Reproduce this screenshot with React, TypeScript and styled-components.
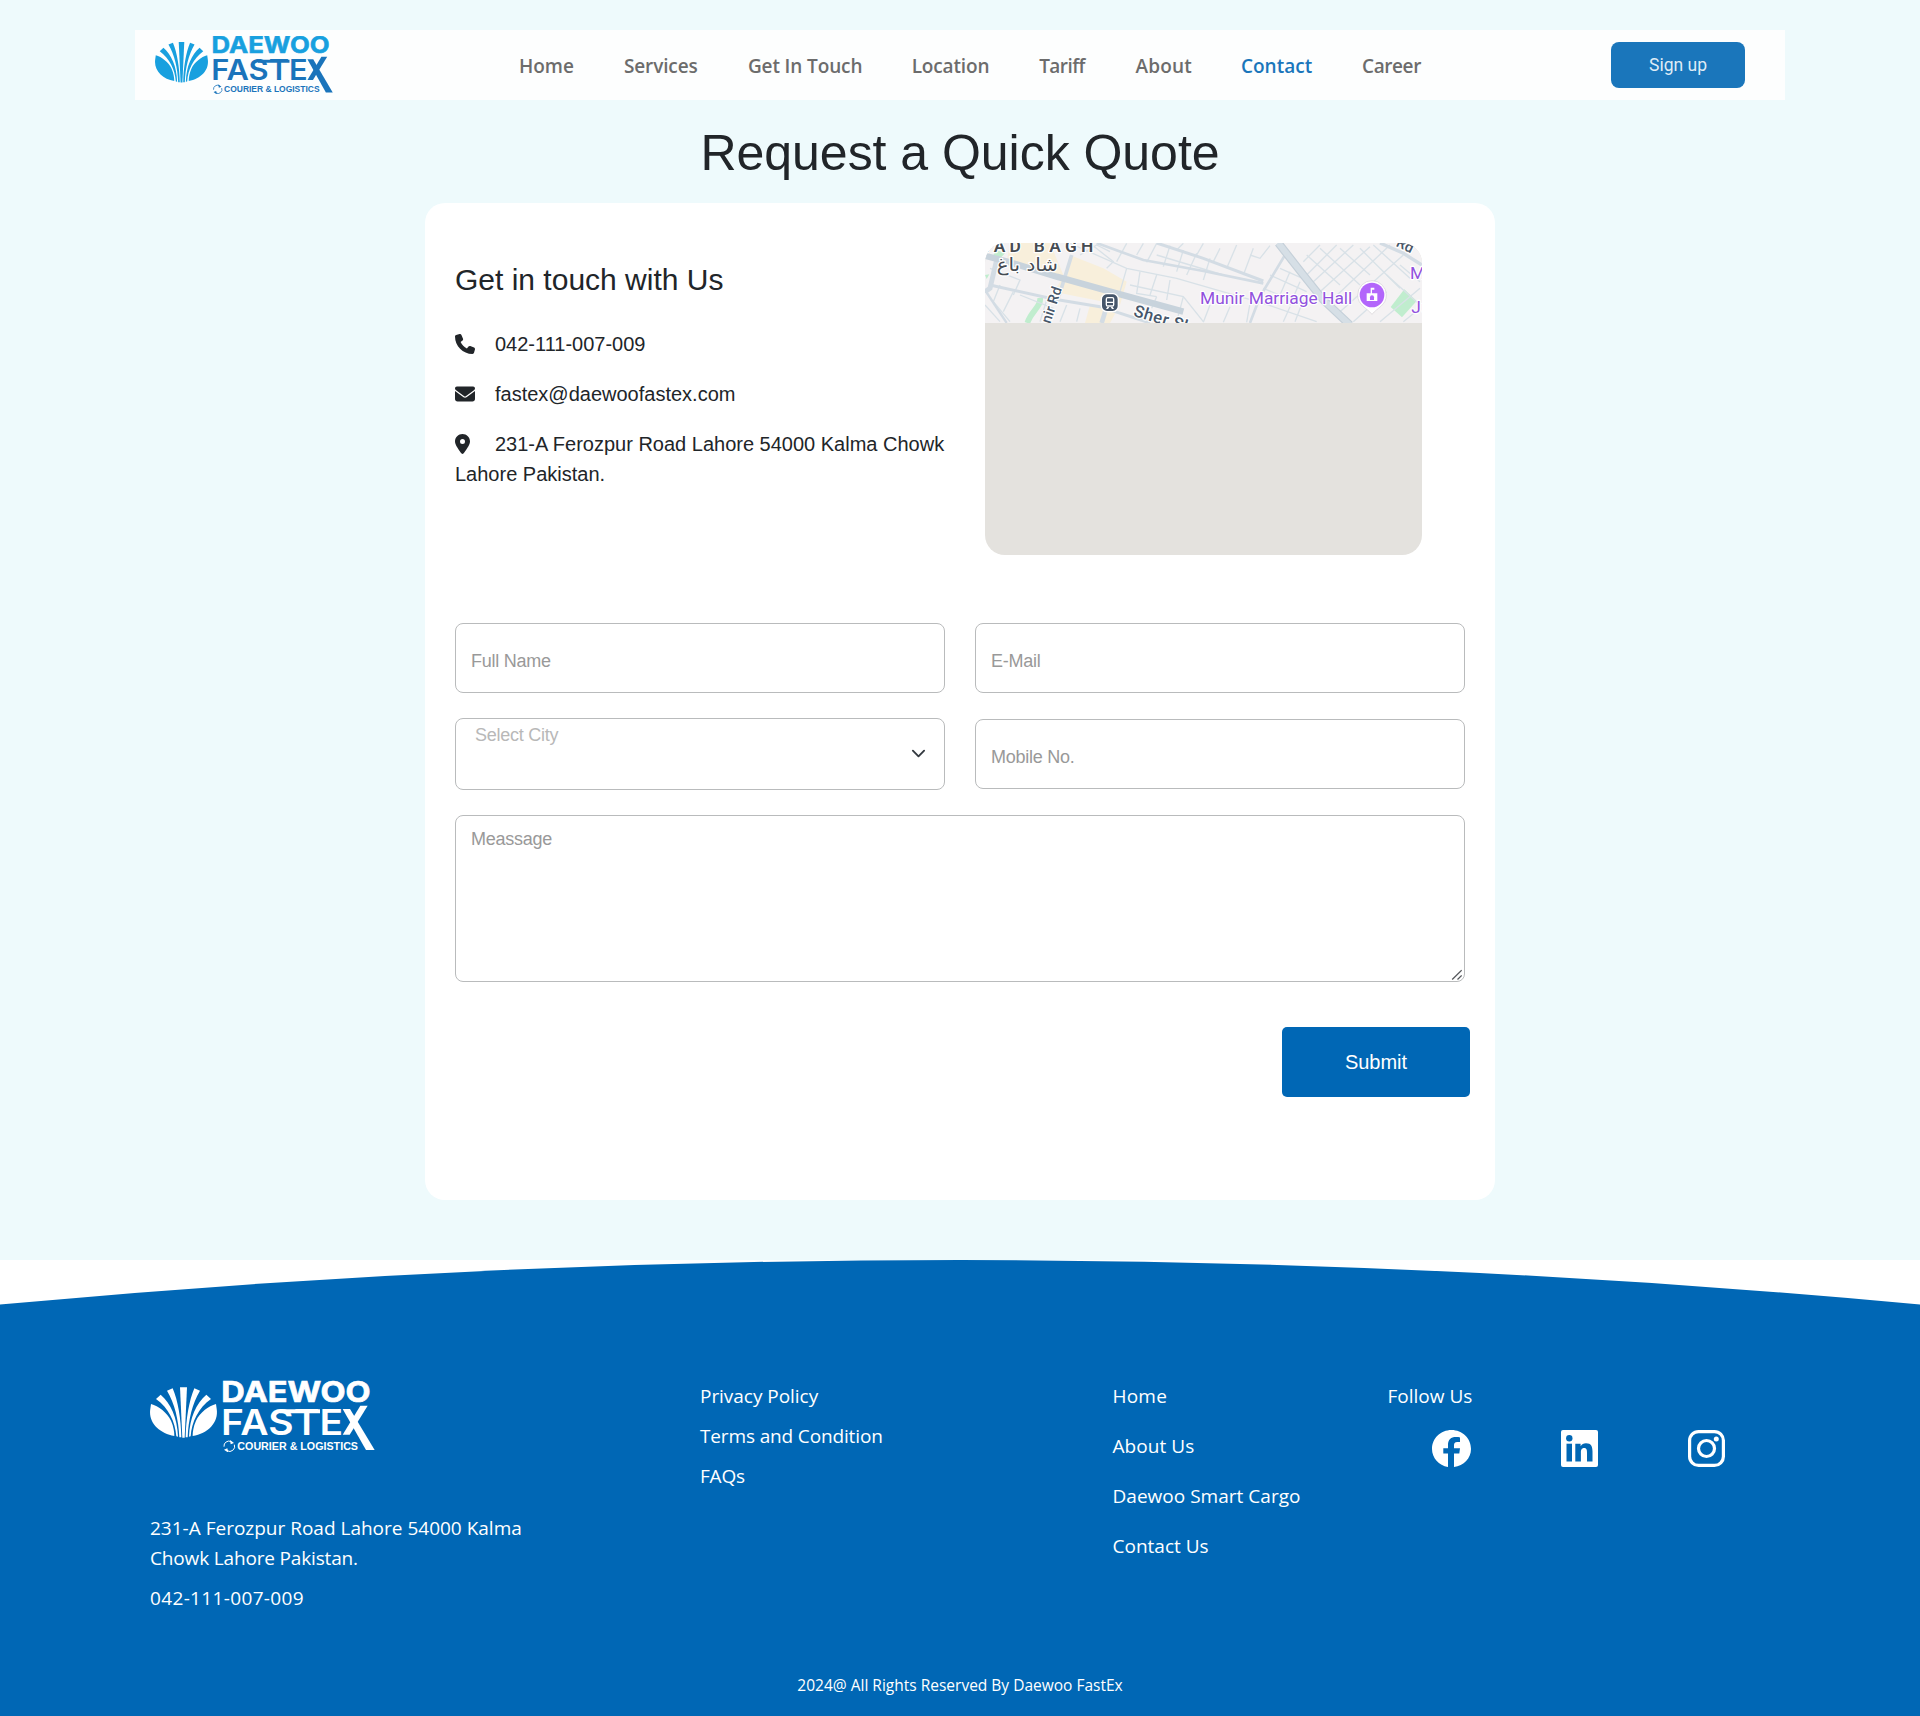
import React from "react";
import styled, { createGlobalStyle } from "styled-components";
import { FaEnvelope, FaLocationDot, FaPhone } from "react-icons/fa6";

const BLUE = "#0067b5";
const UI = `"Open Sans", "Noto Sans", sans-serif`;
const ARIAL = `"Liberation Sans", Arial, sans-serif`;

const GlobalStyle = createGlobalStyle`
  *, *::before, *::after { box-sizing: border-box; }
  body { margin: 0; background: #fff; color: #212529; font-family: ${ARIAL}; font-size: 20px; line-height: 30px; }
  h1, h2, p, ul { margin: 0; padding: 0; font-weight: 400; list-style: none; }
  a { color: inherit; text-decoration: none; }
`;

/* ---------- page shell ---------- */

const Main = styled.main`
  height: 1260px;
  padding-top: 30px;
  background: #eefafc;
`;

const NavBar = styled.header`
  display: flex;
  align-items: center;
  width: 1650px;
  height: 70px;
  margin: 0 auto;
  padding: 0 40px 0 20px;
  background: #fdfefe;
`;

const NavLogo = styled.div`
  display: flex;
  width: 364px;
  padding-bottom: 1px;
`;

const NavList = styled.nav`
  display: flex;
  gap: 50px;
  padding-top: 2px;
`;

const NavLink = styled.a<{ $w: number; $ls: number; $active?: boolean }>`
  width: ${(p) => p.$w}px;
  white-space: nowrap;
  font: 600 19px/30px ${UI};
  letter-spacing: ${(p) => p.$ls}px;
  color: ${(p) => (p.$active ? "#1a76bb" : "#6c6c6c")};
`;

const SignUp = styled.button`
  width: 134px;
  height: 46px;
  margin: 0 0 0 auto;
  padding: 0;
  border: 0;
  border-radius: 8px;
  background: #1a76bb;
  color: #dfecf6;
  font: 400 17.5px/46px Roboto, sans-serif;
`;

const Title = styled.h1`
  margin-top: 23px;
  text-align: center;
  font-size: 50px;
  line-height: 60px;
  letter-spacing: -0.03px;
`;

const Card = styled.section`
  width: 1070px;
  height: 997px;
  margin: 20px auto 0;
  padding: 40px 30px 0;
  border-radius: 20px;
  background: #fff;
`;

/* ---------- contact block ---------- */

const Intro = styled.div`
  display: grid;
  grid-template-columns: 490px 437px;
  column-gap: 40px;
  height: 380px;
`;

const Contact = styled.div`
  padding-top: 19px;
`;

const SubTitle = styled.h2`
  margin-bottom: 31px;
  font-size: 30px;
  line-height: 36px;
`;

const ContactLine = styled.p<{ $gap: number }>`
  margin-bottom: 20px;
  svg { margin-right: ${(p) => p.$gap}px; vertical-align: -2.5px; }
`;

const PinIcon = styled(FaLocationDot)`
  width: 15px;
  height: 20px;
`;

const MapBox = styled.div`
  height: 312px;
  overflow: hidden;
  border-radius: 20px;
  background: #e4e2de;
  svg { display: block; }
`;

/* ---------- form ---------- */

const Form = styled.form`
  display: grid;
  grid-template-columns: 490px 490px;
  column-gap: 30px;
  align-items: center;
`;

const Input = styled.input`
  width: 100%;
  height: 70px;
  padding: 6px 15px 0;
  border: 1px solid #b9bbbc;
  border-radius: 8px;
  outline: 0;
  background: #fff;
  font: 18px ${ARIAL};
  letter-spacing: -0.26px;
  &::placeholder { color: #999; opacity: 1; }
`;

const Select = styled.div`
  display: flex;
  justify-content: space-between;
  height: 72px;
  margin: 25px 0;
  padding: 1px 18px 0 19px;
  border: 1px solid #b9bbbc;
  border-radius: 8px;
  color: #b8b8b8;
  font-size: 18px;
  letter-spacing: -0.26px;
  svg { margin-top: 26px; }
`;

const MessageBox = styled.div`
  position: relative;
  grid-column: 1 / -1;
  height: 167px;
`;

const Message = styled.textarea`
  display: block;
  width: 100%;
  height: 100%;
  padding: 8px 15px;
  border: 1px solid #b9bbbc;
  border-radius: 8px;
  outline: 0;
  resize: none;
  font: 18px/30px ${ARIAL};
  letter-spacing: -0.26px;
  &::placeholder { color: #999; opacity: 1; }
`;

const Grip = styled.svg`
  position: absolute;
  right: 3px;
  bottom: 2px;
`;

const Submit = styled.button`
  grid-column: 2;
  justify-self: end;
  width: 188px;
  height: 70px;
  margin: 45px -5px 0 0;
  padding: 0;
  border: 0;
  border-radius: 5px;
  background: ${BLUE};
  color: #fff;
  font: 20px/70px ${ARIAL};
`;

/* ---------- footer ---------- */

const Curve = styled.svg`
  display: block;
  width: 100%;
  height: 45px;
`;

const Footer = styled.footer`
  height: 411px;
  padding: 75px 0 0 150px;
  overflow: hidden;
  background: ${BLUE};
  color: #fff;
  font: 19px/30px ${UI};
`;

const FooterGrid = styled.div`
  display: grid;
  grid-template-columns: 550px 412.500px 275px 400px;
  height: 293px;
`;

const FooterLogo = styled.div`
  display: flex;
  margin-bottom: 61px;
`;

const FooterList = styled.ul<{ $gap: number }>`
  display: flex;
  flex-direction: column;
  gap: ${(p) => p.$gap}px;
  padding-top: 1px;
`;

const Label = styled.span<{ $ls?: number }>`
  display: block;
  white-space: nowrap;
  letter-spacing: ${(p) => p.$ls ?? 0}px;
`;

const Phone = styled(Label)`
  margin-top: 10px;
`;

const Follow = styled.div`
  padding-top: 1px;
`;

const Socials = styled.div`
  display: flex;
  justify-content: space-between;
  width: 293px;
  margin: 19px 0 0 44.500px;
`;

const Copyright = styled.p`
  margin-left: -150px;
  text-align: center;
  font-size: 15.5px;
  line-height: 24px;
`;

/* ---------- drawings ---------- */

type LogoProps = { width: number; height: number; top: string; bottom: string };

function Logo({ width, height, top, bottom }: LogoProps) {
  const half = (
    <>
      <path d="M93 162C115 168 142 188 153 212C161 230 163 246 163 258C118 250 84 218 91 176Z" />
      <path d="M108 147L122 134C152 160 172 202 174 260L169 259C166 216 146 174 108 147Z" />
      <path d="M141 122L158 115C174 152 183 208 184 262L178 262C176 210 164 160 141 122Z" />
    </>
  );
  return (
    <svg width={width} height={height} viewBox="90 90 675 216" preserveAspectRatio="none">
      <g fill={top}>
        {half}
        <g transform="translate(381 0) scale(-1 1)">{half}</g>
        <path d="M180 112H201L194 263H187Z" />
      </g>
      <text x="304" y="155" textLength="448" lengthAdjust="spacingAndGlyphs" fill={top} stroke={top} strokeWidth="2"
        fontFamily="Inter, sans-serif" fontWeight="750" fontSize="87">DAEWOO</text>
      <text x="303" y="254" textLength="366" lengthAdjust="spacingAndGlyphs" fill={bottom}
        fontFamily="Inter, sans-serif" fontWeight="600" fontSize="105">FASTE</text>
      <g fill={bottom}>
        <path d="M668 177H690L764 300H738Z" />
        <path d="M721 167H743L689 254H668Z" />
        <path d="M480 178H600V190H480Z" />
      </g>
      <g fill="none" stroke={bottom} strokeWidth="3">
        <path d="M312 290A15 15 0 0 1 334 275" />
        <path d="M343 284A15 15 0 0 1 321 302" />
      </g>
      <path d="M330 270L342 279L332 283Z M325 308L312 299L322 295Z" fill={bottom} />
      <text x="352" y="299" textLength="362" lengthAdjust="spacingAndGlyphs" fill={bottom}
        fontFamily="Liberation Sans, sans-serif" fontWeight="700" fontSize="33">COURIER &amp; LOGISTICS</text>
    </svg>
  );
}

const MINOR_ROADS = [
  "M300 55L470 130L620 160L880 235", "M360 55L430 110L410 130", "M330 90L380 60L420 80", "M470 55L440 110",
  "M520 55L500 90", "M560 55L530 112", "M600 62L580 125", "M640 75L620 140", "M680 85L650 150", "M720 100L700 165",
  "M470 130L450 200", "M510 140L500 205L560 215", "M480 180L640 215L700 290", "M560 150L540 210", "M600 165L590 225",
  "M640 55L620 75", "M700 55L680 90", "M750 70L730 110", "M800 60L770 130", "M850 70L820 150", "M900 62L870 100L840 90",
  "M560 90L760 150", "M640 215L620 290", "M720 240L700 292", "M780 245L760 292", "M840 235L830 292", "M560 215L545 250",
  "M900 150L1010 200", "M930 130L1020 170", "M880 190L1000 240", "M960 140L930 210", "M990 170L960 240", "M880 235L1040 290",
  "M960 245L940 290", "M1000 225L975 290", "M1050 60L1000 110", "M1100 60L1010 150", "M1150 60L1030 170", "M1200 65L1050 200",
  "M1260 60L1080 230", "M1300 90L1110 260", "M1010 90L1110 180", "M1050 70L1170 180", "M1110 70L1200 150",
  "M1170 70L1290 190", "M1210 60L1320 160", "M1250 150L1350 240", "M1290 120L1350 170", "M1230 290L1350 190",
  "M1150 290L1250 200", "M1300 290L1350 250", "M60 130L150 165L130 210", "M90 180L70 230L120 290", "M130 200L100 260",
  "M150 210L250 250", "M45 240L90 290", "M230 225L210 290", "M290 240L270 290", "M330 250L320 290",
];

function StreetMap() {
  const halo = { paintOrder: "stroke" as const, stroke: "#fff", strokeWidth: 7, strokeLinejoin: "round" as const };
  return (
    <svg width="437" height="80" viewBox="45 54 1311 240">
      <rect x="45" y="54" width="1311" height="240" fill="#f4f2f3" />
      <g fill="#f8efdb">
        <path d="M120 54H240L280 150L230 150L110 110Z" />
        <path d="M305 92L400 130L470 170L450 240L250 200L285 150Z" />
        <path d="M360 240L440 258L420 294H345Z" />
      </g>
      <g fill="#c0edce">
        <path d="M1303 193L1340 228L1296 277L1262 246Z" />
        <path d="M45 150L58 148L50 162Z M80 75L105 85L90 100L70 90Z" />
      </g>
      <path d="M210 218C215 245 185 255 172 294" fill="none" stroke="#c0edce" strokeWidth="17" />
      <g fill="none" stroke="#d8e1e7" strokeWidth="4">
        {MINOR_ROADS.map((d) => <path key={d} d={d} />)}
      </g>
      <g fill="none" stroke="#d3dce4">
        <path d="M380 54L520 105L700 138L880 175" strokeWidth="8" />
        <path d="M560 54L700 100L880 168" strokeWidth="9" />
        <path d="M945 90L870 215L840 294" strokeWidth="8" />
        <path d="M305 90L265 220" strokeWidth="11" />
        <path d="M80 105L60 190L45 200" strokeWidth="15" />
        <path d="M60 180L250 222L390 245L540 294" strokeWidth="9" />
        <path d="M410 245L395 294" strokeWidth="14" />
        <path d="M45 195L110 294" strokeWidth="7" />
        <path d="M1230 54L1300 85L1356 120" strokeWidth="10" />
      </g>
      <path d="M45 92L120 112L260 155L440 205L640 260" fill="none" stroke="#c8d3dc" strokeWidth="19" />
      <path d="M925 54L1000 150L1060 225L1140 300" fill="none" stroke="#c5d0d9" strokeWidth="25" />
      <path d="M925 54L1000 150L1060 225L1140 300" fill="none" stroke="#d6dfe6" strokeWidth="18" />

      <text x="-24" y="80" textLength="394" fontFamily="Roboto, sans-serif" fontWeight="600" fontSize="52" fill="#454b52" {...halo}>SHAD BAGH</text>
      <text x="264" y="138" textAnchor="end" direction="ltr" textLength="184" lengthAdjust="spacingAndGlyphs" fontFamily="DejaVu Sans, sans-serif" fontSize="55" fill="#454b52" {...halo}>شاد باغ</text>
      <text transform="translate(222 356) rotate(-72)" fontFamily="Roboto, sans-serif" fontWeight="500" fontSize="43" fill="#46566a" {...halo}>Munir Rd</text>
      <text transform="translate(488 272) rotate(17)" fontFamily="Roboto, sans-serif" fontWeight="500" fontSize="50" letterSpacing="1.5" fill="#46566a" {...halo}>Sher Shah Rd</text>
      <text transform="translate(1276 62) rotate(26)" fontFamily="Roboto, sans-serif" fontWeight="500" fontSize="44" fill="#46566a" {...halo}>Rd</text>
      <text x="690" y="236" textLength="457" lengthAdjust="spacingAndGlyphs" fontFamily="Roboto, sans-serif" fontWeight="450" fontSize="52" fill="#9151dd" {...halo}>Munir Marriage Hall</text>
      <text x="1320" y="161" fontFamily="Roboto, sans-serif" fontWeight="450" fontSize="52" fill="#9151dd" {...halo}>M</text>
      <text x="1324" y="263" fontFamily="Roboto, sans-serif" fontWeight="450" fontSize="52" fill="#9151dd" {...halo}>Ju</text>

      <rect x="394" y="206" width="51" height="54" rx="17" fill="#46566a" stroke="#fff" strokeWidth="4" />
      <rect x="409" y="218" width="22" height="25" rx="4" fill="#46566a" stroke="#fff" strokeWidth="4" />
      <path d="M409 230H431V234H409Z M412 246H418L414 252H408Z M422 246H428L432 252H426Z" fill="#fff" />

      <path d="M1206 268C1190 248 1163 241 1163 210A43 43 0 0 1 1249 210C1249 241 1222 248 1206 268Z" fill="#fff" stroke="#d4d2d4" strokeWidth="2" />
      <circle cx="1206" cy="210" r="37" fill="#b366fb" />
      <path d="M1190 228V205H1202V188H1213V194H1206V205H1222V228Z" fill="#fff" />
      <path d="M1200 225V217A6 6 0 0 1 1212 217V225Z" fill="#b366fb" />
    </svg>
  );
}

function Facebook() {
  return (
    <svg width="39" height="37" viewBox="0 0 39 37">
      <path fill="#fff" d="M19.5 0C8.7 0 0 8.4 0 18.9C0 27.8 6.800 35.200 16 37V23.500H11.300V18.200H16V14.800C16 9.600 19 7 23.800 7C25.600 7 27.300 7.200 28 7.400V12H25.300C22.700 12 22 13.400 22 15.300V18.200H28L27.300 23.500H22V37C31.800 35.600 39 28.200 39 18.900C39 8.400 30.300 0 19.500 0Z" />
    </svg>
  );
}

function LinkedIn() {
  return (
    <svg width="37" height="37" viewBox="0 0 37 37">
      <rect width="37" height="37" rx="2" fill="#fff" />
      <g fill={BLUE}>
        <circle cx="8.300" cy="8.300" r="3.200" />
        <rect x="5.500" y="13.700" width="5.500" height="17.800" />
        <path d="M14.300 13.700H19.600V16.200C20.700 14.400 22.500 13.300 25 13.300C30.300 13.300 31.500 16.800 31.500 21.600V31.500H26V22.700C26 20.500 25.900 18 23.200 18C20.400 18 19.900 20.200 19.900 22.500V31.500H14.300Z" />
      </g>
    </svg>
  );
}

function Instagram() {
  return (
    <svg width="37" height="37" viewBox="0 0 37 37" fill="none" stroke="#fff">
      <rect x="1.600" y="1.600" width="33.800" height="33.800" rx="9" strokeWidth="3.200" />
      <circle cx="18.500" cy="18.500" r="8" strokeWidth="3.200" />
      <circle cx="28.300" cy="8.900" r="2.500" fill="#fff" stroke="none" />
    </svg>
  );
}

/* ---------- content ---------- */

const NAV = [
  { text: "Home", w: 54.9, ls: 0 },
  { text: "Services", w: 74, ls: -0.12 },
  { text: "Get In Touch", w: 113.8, ls: -0.12 },
  { text: "Location", w: 77.5, ls: -0.15 },
  { text: "Tariff", w: 46.3, ls: -0.55 },
  { text: "About", w: 55.5, ls: 0.2 },
  { text: "Contact", w: 71, ls: 0, active: true },
  { text: "Career", w: 59, ls: -0.4 },
];

const POLICIES = [
  { text: "Privacy Policy", ls: -0.04 },
  { text: "Terms and Condition", ls: -0.14 },
  { text: "FAQs", ls: -0.2 },
];

const LINKS = [
  { text: "Home", ls: 0.2 },
  { text: "About Us", ls: 0.07 },
  { text: "Daewoo Smart Cargo", ls: 0.02 },
  { text: "Contact Us", ls: 0 },
];

export default function App() {
  return (
    <>
      <GlobalStyle />
      <Main>
        <NavBar>
          <NavLogo><Logo width={178} height={58} top="#18a0df" bottom="#1a74bb" /></NavLogo>
          <NavList>
            {NAV.map((n) => (
              <NavLink key={n.text} href="#" $w={n.w} $ls={n.ls} $active={n.active}>{n.text}</NavLink>
            ))}
          </NavList>
          <SignUp type="button">Sign up</SignUp>
        </NavBar>

        <Title>Request a Quick Quote</Title>

        <Card>
          <Intro>
            <Contact>
              <SubTitle>Get in touch with Us</SubTitle>
              <ContactLine $gap={20}><FaPhone size={20} />042-111-007-009</ContactLine>
              <ContactLine $gap={20}><FaEnvelope size={20} />fastex@daewoofastex.com</ContactLine>
              <ContactLine $gap={25}><PinIcon />231-A Ferozpur Road Lahore 54000 Kalma Chowk Lahore Pakistan.</ContactLine>
            </Contact>
            <MapBox><StreetMap /></MapBox>
          </Intro>

          <Form>
            <Input placeholder="Full Name" />
            <Input placeholder="E-Mail" />
            <Select>
              Select City
              <svg width="15" height="15" viewBox="0 0 16 16" fill="none" stroke="#343a40" strokeWidth="2" strokeLinecap="round" strokeLinejoin="round">
                <path d="m2 5 6 6 6-6" />
              </svg>
            </Select>
            <Input placeholder="Mobile No." />
            <MessageBox>
              <Message placeholder="Meassage" />
              <Grip width="11" height="11" viewBox="0 0 11 11" stroke="#55585c" strokeWidth="1.300">
                <path d="M1.200 10.500L10.700 1.200M6.500 10.500L10.700 6.500" />
              </Grip>
            </MessageBox>
            <Submit type="button">Submit</Submit>
          </Form>
        </Card>
      </Main>

      <Curve viewBox="0 0 1920 45" preserveAspectRatio="none">
        <path d="M0 45V44.500Q960 -44.500 1920 44.500V45Z" fill={BLUE} />
      </Curve>
      <Footer>
        <FooterGrid>
          <div>
            <FooterLogo><Logo width={225} height={72} top="#fff" bottom="#fff" /></FooterLogo>
            <Label>231-A Ferozpur Road Lahore 54000 Kalma</Label>
            <Label $ls={-0.16}>Chowk Lahore Pakistan.</Label>
            <Phone $ls={0.35}>042-111-007-009</Phone>
          </div>
          <FooterList $gap={10}>
            {POLICIES.map((l) => <li key={l.text}><Label as="a" $ls={l.ls}>{l.text}</Label></li>)}
          </FooterList>
          <FooterList $gap={20}>
            {LINKS.map((l) => <li key={l.text}><Label as="a" $ls={l.ls}>{l.text}</Label></li>)}
          </FooterList>
          <Follow>
            <Label>Follow Us</Label>
            <Socials><Facebook /><LinkedIn /><Instagram /></Socials>
          </Follow>
        </FooterGrid>
        <Copyright>2024@ All Rights Reserved By Daewoo FastEx</Copyright>
      </Footer>
    </>
  );
}
